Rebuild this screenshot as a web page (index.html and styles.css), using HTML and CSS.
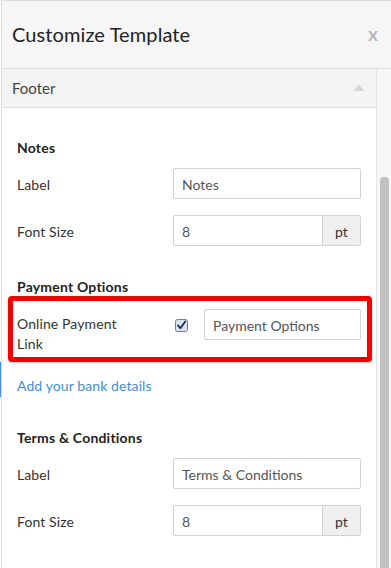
FILE: index.html
```html
<!DOCTYPE html>
<html lang="en">
<head>
  <meta charset="UTF-8" />
  <meta name="viewport" content="width=device-width, initial-scale=1.0"/>
  <title>Customize Template</title>
  <link rel="stylesheet" href="styles.css">
</head>
<body>

  <div class="panel">
    <!-- header -->
    <div class="panel-head">
      <h1>Customize Template</h1>
      <span class="close">x</span>
    </div>

    <div class="panel-body">
      <div class="panel-main">
        <div class="section-bar">
          <span>Footer</span>
          <span class="caret-up"></span>
        </div>

        <div class="content">
          <!-- Notes -->
          <h3>Notes</h3>
          <div class="row">
            <label>Label</label>
            <div class="field"><input type="text" value="Notes"></div>
          </div>
          <div class="row">
            <label>Font Size</label>
            <div class="field with-addon"><input type="text" value="8"><span class="addon">pt</span></div>
          </div>

          <!-- Payment -->
          <h3 class="gap-top">Payment Options</h3>
          <div class="row highlight">
            <label class="multi">Online Payment<br>Link</label>
            <span class="check">
              <svg width="13" height="13" viewBox="0 0 13 13">
                <rect x="0.5" y="0.5" width="12" height="12" rx="2" fill="#d9e3f3" stroke="#6b7b99"/>
                <path d="M3 6.5 L5.4 9.2 L10.2 2.4" fill="none" stroke="#1d2a44" stroke-width="1.8" stroke-linecap="round" stroke-linejoin="round"/>
              </svg>
            </span>
            <div class="field short"><input type="text" value="Payment Options"></div>
          </div>
          <div class="bank-line"><a href="#">Add your bank details</a></div>

          <!-- Terms -->
          <h3 class="terms">Terms &amp; Conditions</h3>
          <div class="row">
            <label>Label</label>
            <div class="field"><input type="text" value="Terms &amp; Conditions"></div>
          </div>
          <div class="row">
            <label>Font Size</label>
            <div class="field with-addon"><input type="text" value="8"><span class="addon">pt</span></div>
          </div>
        </div>
      </div>

      <div class="scroll-track"><div class="scroll-thumb"></div></div>
    </div>
  </div>

</body>
</html>
```

FILE: styles.css
```css
* { margin: 0; padding: 0; box-sizing: border-box; font-family: 'Lato', 'Open Sans', sans-serif; }
body { background: #fff; color: #333; height: 568px; overflow: hidden; }

.panel {
  height: 568px;
  border-top: 1px solid #dedede;
  border-left: 1px solid #dedede;
  margin-left: 1px;
  display: flex;
  flex-direction: column;
}

.panel-head {
  height: 68px;
  background: #f6f6f6;
  border-bottom: 1px solid #dcdcdc;
  display: flex;
  align-items: center;
  justify-content: space-between;
  padding: 0 13px 0 10px;
}
.panel-head h1 { font-size: 20px; font-weight: 400; color: #222; letter-spacing: 0.1px; margin-top: -2px; }
.close { font-size: 19px; font-weight: 700; color: #b8b8b8; margin-top: -3px; }

.panel-body { flex: 1; display: flex; min-height: 0; }
.panel-main { flex: 1; min-width: 0; background: #fff; border-right: 1px solid #e6e6e6; }

.section-bar {
  height: 39px;
  background: #f4f4f4;
  border-bottom: 1px solid #dcdcdc;
  display: flex;
  align-items: center;
  justify-content: space-between;
  padding: 0 11px 0 10px;
  font-size: 15px;
  color: #444;
}
.caret-up {
  width: 0; height: 0;
  border-left: 6px solid transparent;
  border-right: 6px solid transparent;
  border-bottom: 6px solid #d4d4d4;
}

.content { padding: 30px 15px 0 15px; }
.content h3 { font-size: 14px; font-weight: 700; color: #222; line-height: 20px; letter-spacing: 0.2px; margin-bottom: 10px; }
.content h3.gap-top { margin-top: 31px; margin-bottom: -1px; }
.content h3.terms { margin-top: 31px; }

.row { display: flex; align-items: center; margin-bottom: 16px; }
.row label { width: 156px; flex: none; font-size: 14px; color: #333; padding-top: 2px; letter-spacing: 0.1px; }

.field { flex: none; width: 188px; height: 31px; display: flex; border: 1px solid #d2d2d2; border-radius: 2px; }
.field input {
  flex: 1; min-width: 0; width: 0; border: none; outline: none; background: transparent;
  padding: 1px 8px 0; font-size: 14px; color: #555; font-family: 'Lato', 'Open Sans', sans-serif;
}
.addon {
  width: 38px; flex: none; background: #efefef; border-left: 1px solid #d2d2d2;
  display: flex; align-items: center; justify-content: center;
  font-size: 14px; color: #333; padding-top: 1px;
}

.highlight {
  align-items: flex-start;
  margin: 0 -11px 0 -9px;
  border: 5px solid #f40000;
  border-radius: 4px;
  padding: 8px 6px 3px 4px;
  box-shadow: 0 1px 2px rgba(0,0,0,0.25);
}
.highlight label.multi { line-height: 20px; margin-top: 5px; padding-top: 0; }
.check { width: 31px; flex: none; padding-left: 2px; margin-top: 10px; display: flex; }
.field.short { width: 157px; }

.bank-line {
  margin: 0 0 0 -17px;
  padding: 14px 0 2px 16px;
  border-left: 1px solid #4a90e2;
  line-height: 18px;
}
.bank-line a { font-size: 14px; color: #418ed8; text-decoration: none; letter-spacing: 0.1px; }

.scroll-track { width: 14px; flex: none; background: #f7f7f7; padding: 108px 2px 0 3px; }
.scroll-thumb { height: 100%; background: #c1c1c1; border-radius: 4px 4px 0 0; }
```
